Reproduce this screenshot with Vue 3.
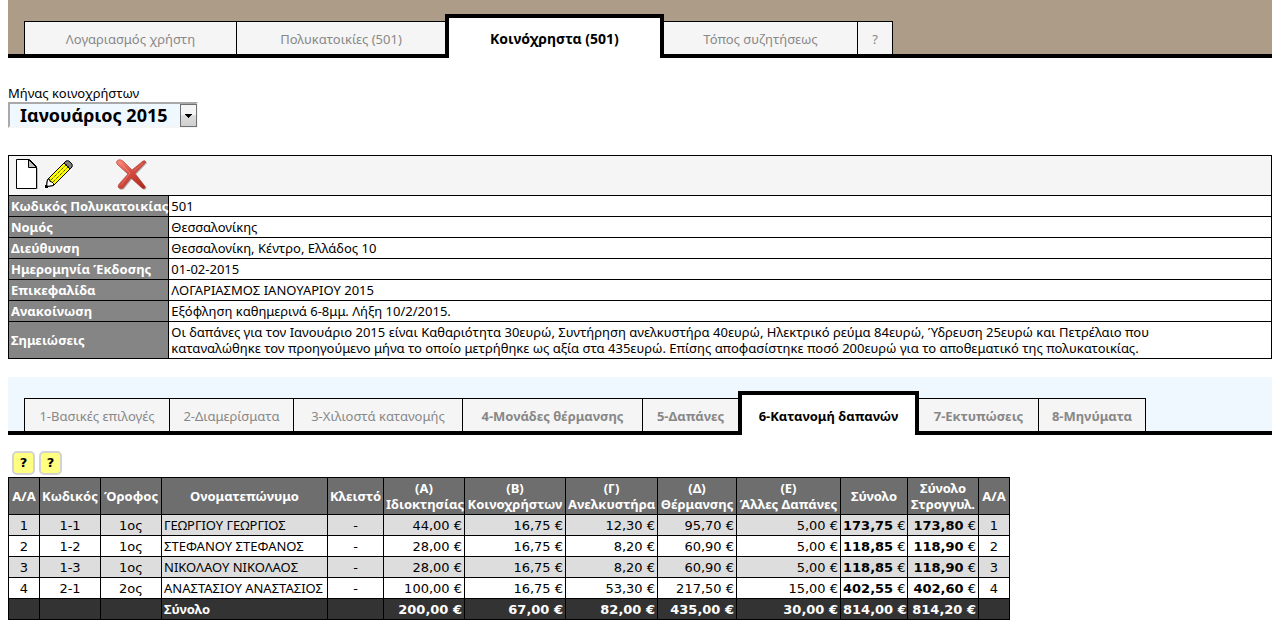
<script setup>
import { ref } from 'vue'

const month = ref('Ιανουάριος 2015')

const mainTabs = [
  { label: 'Λογαριασμός χρήστη' },
  { label: 'Πολυκατοικίες (501)' },
  { label: 'Κοινόχρηστα (501)', active: true },
  { label: 'Τόπος συζητήσεως' },
  { label: '?' },
]

const stepTabs = [
  { label: '1-Βασικές επιλογές' },
  { label: '2-Διαμερίσματα' },
  { label: '3-Χιλιοστά κατανομής' },
  { label: '4-Μονάδες θέρμανσης', strong: true },
  { label: '5-Δαπάνες', strong: true },
  { label: '6-Κατανομή δαπανών', active: true },
  { label: '7-Εκτυπώσεις', strong: true },
  { label: '8-Μηνύματα', strong: true },
]

const details = [
  ['Κωδικός Πολυκατοικίας', '501'],
  ['Νομός', 'Θεσσαλονίκης'],
  ['Διεύθυνση', 'Θεσσαλονίκη, Κέντρο, Ελλάδος 10'],
  ['Ημερομηνία Έκδοσης', '01-02-2015'],
  ['Επικεφαλίδα', 'ΛΟΓΑΡΙΑΣΜΟΣ ΙΑΝΟΥΑΡΙΟΥ 2015'],
  ['Ανακοίνωση', 'Εξόφληση καθημερινά 6-8μμ. Λήξη 10/2/2015.'],
  ['Σημειώσεις', 'Οι δαπάνες για τον Ιανουάριο 2015 είναι Καθαριότητα 30ευρώ, Συντήρηση ανελκυστήρα 40ευρώ, Ηλεκτρικό ρεύμα 84ευρώ, Ύδρευση 25ευρώ και Πετρέλαιο που καταναλώθηκε τον προηγούμενο μήνα το οποίο μετρήθηκε ως αξία στα 435ευρώ. Επίσης αποφασίστηκε ποσό 200ευρώ για το αποθεματικό της πολυκατοικίας.'],
]

const headers = [
  ['Α/Α'], ['Κωδικός'], ['Όροφος'], ['Ονοματεπώνυμο'], ['Κλειστό'],
  ['(Α)', 'Ιδιοκτησίας'], ['(Β)', 'Κοινοχρήστων'], ['(Γ)', 'Ανελκυστήρα'],
  ['(Δ)', 'Θέρμανσης'], ['(Ε)', 'Άλλες Δαπάνες'], ['Σύνολο'],
  ['Σύνολο', 'Στρογγυλ.'], ['Α/Α'],
]

const rows = [
  { n: 1, code: '1-1', floor: '1ος', name: 'ΓΕΩΡΓΙΟΥ ΓΕΩΡΓΙΟΣ', costs: ['44,00', '16,75', '12,30', '95,70', '5,00'], totals: ['173,75', '173,80'] },
  { n: 2, code: '1-2', floor: '1ος', name: 'ΣΤΕΦΑΝΟΥ ΣΤΕΦΑΝΟΣ', costs: ['28,00', '16,75', '8,20', '60,90', '5,00'], totals: ['118,85', '118,90'] },
  { n: 3, code: '1-3', floor: '1ος', name: 'ΝΙΚΟΛΑΟΥ ΝΙΚΟΛΑΟΣ', costs: ['28,00', '16,75', '8,20', '60,90', '5,00'], totals: ['118,85', '118,90'] },
  { n: 4, code: '2-1', floor: '2ος', name: 'ΑΝΑΣΤΑΣΙΟΥ ΑΝΑΣΤΑΣΙΟΣ', costs: ['100,00', '16,75', '53,30', '217,50', '15,00'], totals: ['402,55', '402,60'] },
]

const sums = ['200,00', '67,00', '82,00', '435,00', '30,00', '814,00', '814,20']
</script>

<template>
  <div class="page">
    <nav class="tabs main">
      <a v-for="t in mainTabs" :key="t.label" href="#" class="tab" :class="{ active: t.active }">{{ t.label }}</a>
    </nav>

    <div class="month">
      <label for="month">Μήνας κοινοχρήστων</label>
      <div class="picker">
        <select id="month" v-model="month">
          <option>Ιανουάριος 2015</option>
        </select>
        <span class="arrow"><svg width="7" height="4" viewBox="0 0 7 4" shape-rendering="crispEdges"><path d="M0 0H7V1H6V2H5V3H4V4H3V3H2V2H1V1H0Z" /></svg></span>
      </div>
    </div>

    <table class="details">
      <tbody>
        <tr>
          <td colspan="2" class="tools">
            <div class="toolbar">
              <button type="button" aria-label="Νέο">
                <svg width="22" height="31" viewBox="0 0 22 31">
                  <path d="M21.5 9V30" stroke="#c0c0c0" fill="none" />
                  <path d="M.5 .5H13.5L20.5 7.5V29.5H.5Z" fill="#fff" stroke="#000" />
                  <path d="M12.5 .5V8.5H20.5Z" fill="#c0c0c0" stroke="#000" />
                </svg>
              </button>
              <button type="button" aria-label="Επεξεργασία" class="edit">
                <svg width="28" height="28" viewBox="0 0 28 28">
                  <path d="M2.500 19.500L20.500 1.500L26.500 7.500L8.500 25.500L1.500 26.500Z" fill="#ff0" stroke="#000" />
                  <path d="M19 3L21 1Q22 .5 24 1L27 4Q27.500 6 27 7L25 9Z" fill="#808080" stroke="#000" />
                  <path d="M4.500 21.500L22 4M6.500 23.500L24 6" stroke="#000" stroke-dasharray="1 1" />
                  <path d="M2.500 19.500L4.500 19L5 21.500L7 22L8.500 23.500L8.500 25.500L1.500 26.500Z" fill="#fff" stroke="#000" />
                  <path d="M0 28V25H2L3 26V28Z" />
                </svg>
              </button>
              <button type="button" aria-label="Διαγραφή" class="delete">
                <svg width="31" height="32" viewBox="0 0 31 32">
                  <defs>
                    <linearGradient id="red" x1="0" y1="0" x2="1" y2="1">
                      <stop offset="0" stop-color="#ff8c80" />
                      <stop offset=".5" stop-color="#d2493e" />
                      <stop offset="1" stop-color="#a82418" />
                    </linearGradient>
                  </defs>
                  <path d="M1 2Q4 -1 8 3L16 11L27 2Q29 1 30 3L19 14.500L29.500 28Q28 31 26 29L15 19L7 29Q4 31 2 28Q2 26 4 24L12 15L1 5Q0 3 1 2Z" fill="#666" opacity=".5" transform="translate(1 1)" />
                  <path d="M1 2Q4 -1 8 3L16 11L27 2Q29 1 30 3L19 14.500L29.500 28Q28 31 26 29L15 19L7 29Q4 31 2 28Q2 26 4 24L12 15L1 5Q0 3 1 2Z" fill="url(#red)" stroke="#b8433b" stroke-width=".7" />
                  <path d="M3 3L14 14L5 26M18 12L27 4" fill="none" stroke="#ffaaa0" opacity=".4" />
                </svg>
              </button>
            </div>
          </td>
        </tr>
        <tr v-for="d in details" :key="d[0]">
          <th scope="row">{{ d[0] }}</th>
          <td>{{ d[1] }}</td>
        </tr>
      </tbody>
    </table>

    <nav class="tabs steps">
      <a v-for="t in stepTabs" :key="t.label" href="#" class="tab" :class="{ active: t.active, strong: t.strong }">{{ t.label }}</a>
    </nav>

    <div class="helps">
      <button type="button">?</button>
      <button type="button">?</button>
    </div>

    <table class="costs">
      <colgroup>
        <col class="c-num"><col class="c-code"><col class="c-code"><col class="c-name"><col class="c-closed">
        <col class="c-own"><col class="c-shared"><col class="c-lift"><col class="c-heat"><col class="c-other">
        <col class="c-total"><col class="c-round"><col class="c-num">
      </colgroup>
      <thead>
        <tr>
          <th v-for="(h, i) in headers" :key="i" scope="col">
            <span v-for="line in h" :key="line" class="line">{{ line }}</span>
          </th>
        </tr>
      </thead>
      <tbody>
        <tr v-for="r in rows" :key="r.n">
          <td>{{ r.n }}</td>
          <td>{{ r.code }}</td>
          <td>{{ r.floor }}</td>
          <td class="name">{{ r.name }}</td>
          <td>-</td>
          <td v-for="(c, i) in r.costs" :key="i" class="money">{{ c }} €</td>
          <td v-for="(c, i) in r.totals" :key="'t' + i" class="money"><b>{{ c }}</b> €</td>
          <td>{{ r.n }}</td>
        </tr>
      </tbody>
      <tfoot>
        <tr>
          <td></td><td></td><td></td>
          <td class="name">Σύνολο</td>
          <td></td>
          <td v-for="(s, i) in sums" :key="i" class="money">{{ s }} €</td>
          <td></td>
        </tr>
      </tfoot>
    </table>
  </div>
</template>

<style>
body {
  margin: 0;
  background: #fff;
}
</style>

<style scoped>
.page {
  margin: 0 8px;
  padding-bottom: 16px;
  font: 13px/16px "Noto Sans", Verdana, sans-serif;
  color: #000;
}

.tabs {
  display: grid;
  align-items: end;
  box-sizing: border-box;
  height: 58px;
  padding-left: 16px;
  background: linear-gradient(#000, #000) bottom / 100% 4px no-repeat #ad9c87;
}
.main {
  grid-template-columns: 212px 209px 219px 193px 36px;
}
.steps {
  grid-template-columns: 145px 124px 169px 180px 96px 181px 119px 108px;
  margin-top: 18px;
  background-color: #f0f8ff;
}
.tab {
  box-sizing: border-box;
  height: 33px;
  margin-bottom: 4px;
  border: 1px solid #000;
  border-width: 1px 0 0 1px;
  background: #f5f5f5;
  color: #888;
  line-height: 34px;
  text-align: center;
  text-decoration: none;
  white-space: nowrap;
}
.tab:last-child {
  border-right-width: 1px;
}
.strong {
  font-weight: bold;
}
.active {
  height: 44px;
  margin-bottom: 0;
  border-width: 4px 4px 0;
  background: #fff;
  color: #000;
  font-weight: bold;
  line-height: 42px;
}
.main .active {
  font-size: 14px;
}
.active + .tab {
  border-left-width: 0;
}

.month {
  margin-top: 26px;
}
.month label {
  display: block;
  line-height: 18px;
}
.picker {
  position: relative;
  width: 190px;
}
select {
  display: block;
  appearance: none;
  box-sizing: border-box;
  width: 100%;
  height: 26px;
  padding: 0 20px 0 10px;
  border: 2px solid #a9a9a9;
  border-right-color: #f5f5f5;
  border-bottom-color: #f5f5f5;
  border-radius: 0;
  background: #f0f8ff;
  color: #000;
  font: bold 18px/22px "Noto Sans", Verdana, sans-serif;
}
.arrow {
  position: absolute;
  top: 2px;
  right: 1px;
  display: flex;
  align-items: center;
  justify-content: center;
  box-sizing: border-box;
  width: 17px;
  height: 23px;
  border: 1px solid #707070;
  background: linear-gradient(#f4f4f4 50%, #dcdcdc 50%, #cfcfcf);
  pointer-events: none;
}

table {
  border-collapse: collapse;
}
th,
td {
  padding: 2px;
  border: 1px solid #000;
}
.details {
  width: 100%;
  margin-top: 27px;
}
.details th {
  width: 157px;
  padding-right: 0;
  background: #858585;
  color: #fff;
  text-align: left;
  white-space: nowrap;
}
.details td {
  padding-right: 50px;
}
.details .tools {
  padding: 3px 7px 5px;
  background: #f5f5f5;
}
.toolbar {
  display: flex;
  align-items: flex-start;
  height: 31px;
}
.toolbar button {
  padding: 0;
  border: 0;
  background: none;
}
.toolbar svg {
  display: block;
}
.toolbar .edit {
  margin: 1px 0 0 7px;
}
.toolbar .delete {
  margin-left: 43px;
}

.helps {
  display: flex;
  gap: 4px;
  margin: 16px 0 2px;
  padding-left: 4px;
}
.helps button {
  box-sizing: border-box;
  width: 23px;
  height: 24px;
  padding: 0;
  border: 2px solid #d3d3d3;
  border-radius: 5px;
  background: #ffff80;
  color: #000;
  font: bold 13px/16px Verdana, "DejaVu Sans", sans-serif;
}

.costs {
  table-layout: fixed;
  width: 1002px;
  text-align: center;
  white-space: nowrap;
}
.c-num { width: 31px; }
.c-code { width: 61px; }
.c-name { width: 166px; }
.c-closed { width: 56px; }
.c-own { width: 81px; }
.c-shared { width: 101px; }
.c-lift { width: 92px; }
.c-heat { width: 79px; }
.c-other { width: 104px; }
.c-total { width: 67px; }
.c-round { width: 71px; }
.costs th {
  background: #6e6e6e;
  color: #fff;
}
.costs .line {
  display: block;
}
.costs td {
  padding: 3px 2px 1px;
  font-family: Verdana, "DejaVu Sans", sans-serif;
}
.costs .name {
  padding: 2px;
  font-family: "Noto Sans", Verdana, sans-serif;
  text-align: left;
}
.costs .money {
  text-align: right;
}
.costs tbody tr:nth-child(odd) {
  background: #ddd;
}
.costs tfoot td {
  height: 16px;
  background: #333;
  color: #fff;
  font-weight: bold;
}
</style>
